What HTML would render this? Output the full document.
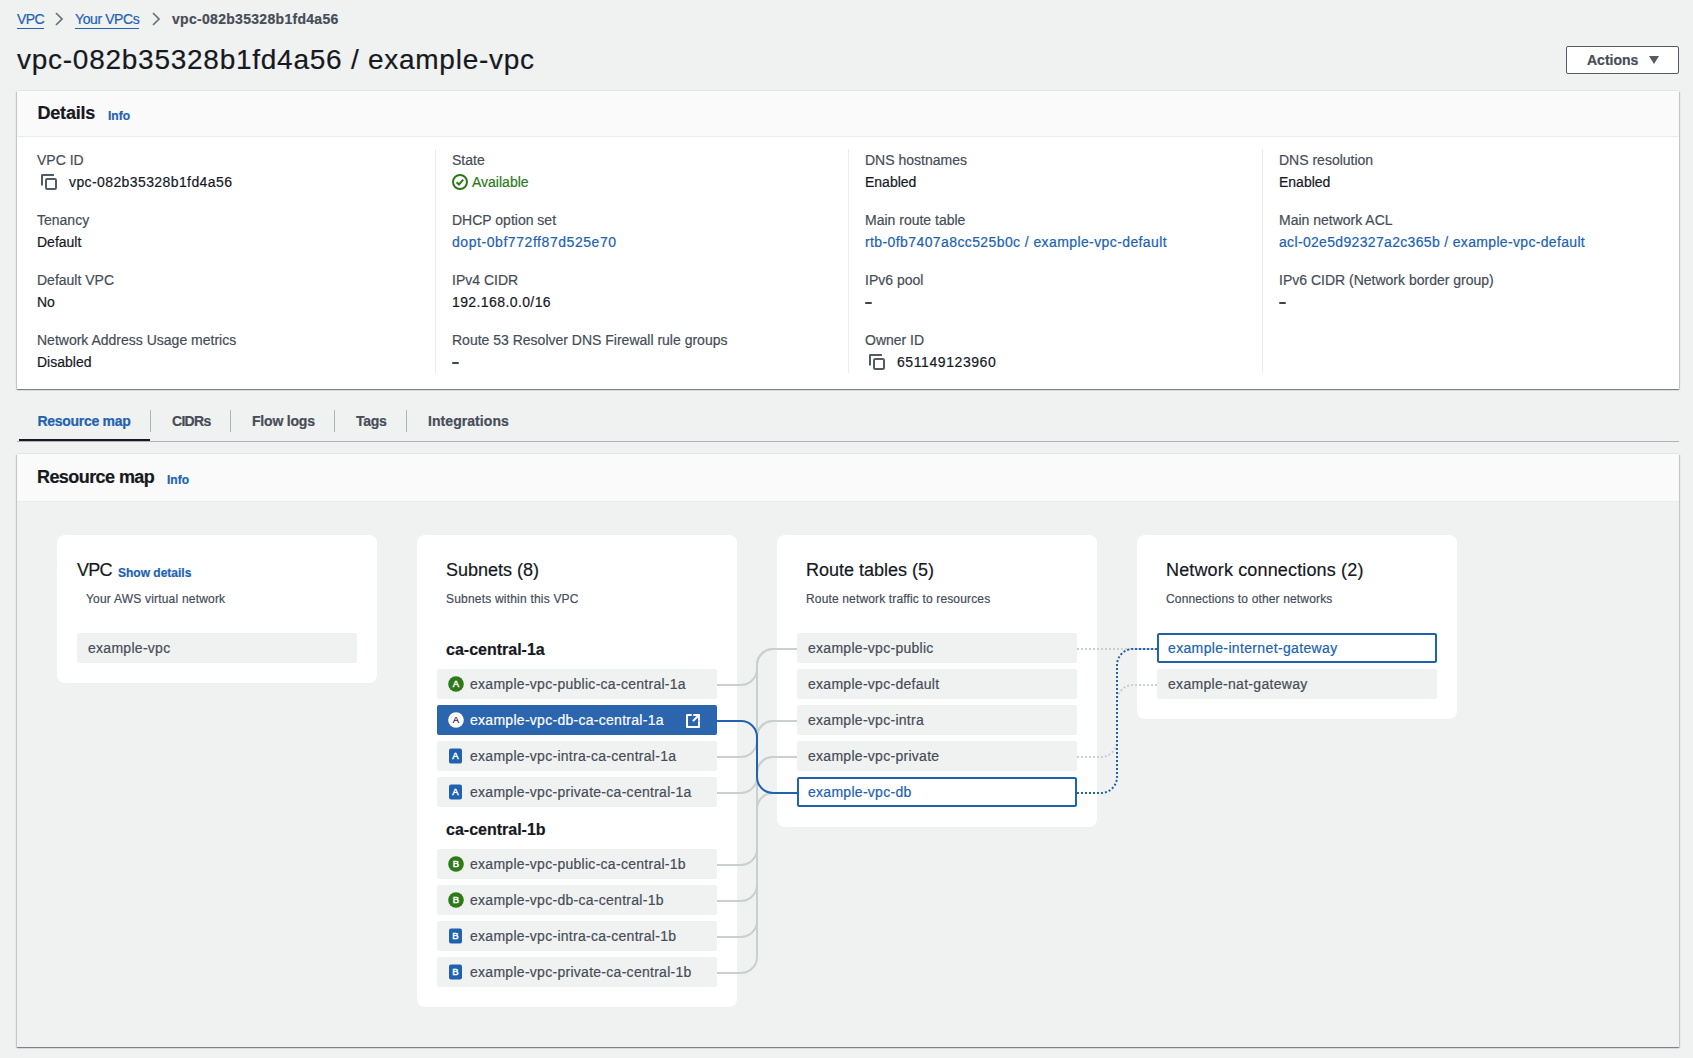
<!DOCTYPE html>
<html><head><meta charset="utf-8">
<style>
*{box-sizing:border-box;margin:0;padding:0}
html,body{width:1693px;height:1058px;overflow:hidden;background:#f0f1f1;font-family:"Liberation Sans",sans-serif;color:#16191f}
.a{position:absolute;white-space:nowrap;-webkit-text-stroke:0.2px currentColor}
.box{position:absolute;box-shadow:0 1px 1px 0 rgba(0,28,36,.3),1px 1px 1px 0 rgba(0,28,36,.15),-1px 1px 1px 0 rgba(0,28,36,.15),0 -1px 0 0 rgba(0,28,36,.05)}
.hdr{position:absolute;left:0;top:0;right:0;background:#fafafa;border-bottom:1px solid #eaeded}
</style></head><body>
<div class="a" style="left:17px;top:10.15px;font-size:14px;line-height:18px;font-weight:normal;color:#2162b0;letter-spacing:-0.6px;"><span style="border-bottom:1px solid #2162b0;padding-bottom:1px">VPC</span></div>
<svg class="a" style="left:54px;top:12px" width="10" height="14" viewBox="0 0 10 14"><path d="M2 1 L8 7 L2 13" fill="none" stroke="#687078" stroke-width="1.7"/></svg>
<div class="a" style="left:75px;top:10.15px;font-size:14px;line-height:18px;font-weight:normal;color:#2162b0;letter-spacing:-0.4px;"><span style="border-bottom:1px solid #2162b0;padding-bottom:1px">Your VPCs</span></div>
<svg class="a" style="left:151px;top:12px" width="10" height="14" viewBox="0 0 10 14"><path d="M2 1 L8 7 L2 13" fill="none" stroke="#687078" stroke-width="1.7"/></svg>
<div class="a" style="left:172px;top:10.15px;font-size:14px;line-height:18px;font-weight:bold;color:#464d57;letter-spacing:0.3px;">vpc-082b35328b1fd4a56</div>
<div class="a" style="left:17px;top:41.90px;font-size:28px;line-height:36px;font-weight:normal;color:#16191f;letter-spacing:0.74px;">vpc-082b35328b1fd4a56 / example-vpc</div>
<div class="a" style="left:1566px;top:46px;width:113px;height:28px;border:1px solid #545b64;border-radius:2px;background:#fff"></div>
<div class="a" style="left:1587px;top:50.95px;font-size:14px;line-height:18px;font-weight:bold;color:#464d57;letter-spacing:0px;">Actions</div>
<svg class="a" style="left:1648px;top:55px" width="12" height="10" viewBox="0 0 12 10"><path d="M1 1 H11 L6 9 Z" fill="#545b64"/></svg>
<div class="box" style="left:17px;top:91px;width:1662px;height:298px;background:#fff"><div class="hdr" style="height:46px"></div></div>
<div class="a" style="left:37.5px;top:102.06px;font-size:18px;line-height:23px;font-weight:bold;color:#16191f;letter-spacing:-0.2px;">Details</div>
<div class="a" style="left:108px;top:107.64px;font-size:12px;line-height:16px;font-weight:bold;color:#2162b0;letter-spacing:0px;">Info</div>
<div class="a" style="left:435px;top:149px;width:1px;height:224px;background:#eaeded"></div>
<div class="a" style="left:848px;top:149px;width:1px;height:224px;background:#eaeded"></div>
<div class="a" style="left:1262px;top:149px;width:1px;height:224px;background:#eaeded"></div>
<div class="a" style="left:37px;top:151.15px;font-size:14px;line-height:18px;font-weight:normal;color:#464d57;letter-spacing:0px;">VPC ID</div>
<svg class="a" style="left:41px;top:174px" width="16" height="16" viewBox="0 0 16 16"><path d="M1 11.5 V1 H13" fill="none" stroke="#545b64" stroke-width="2" stroke-linejoin="round"/><rect x="5" y="5" width="10" height="10" rx="1.2" fill="none" stroke="#545b64" stroke-width="2"/></svg>
<div class="a" style="left:69px;top:173.15px;font-size:14px;line-height:18px;font-weight:normal;color:#16191f;letter-spacing:0.4px;">vpc-082b35328b1fd4a56</div>
<div class="a" style="left:37px;top:211.15px;font-size:14px;line-height:18px;font-weight:normal;color:#464d57;letter-spacing:0px;">Tenancy</div>
<div class="a" style="left:37px;top:233.15px;font-size:14px;line-height:18px;font-weight:normal;color:#16191f;letter-spacing:0px;">Default</div>
<div class="a" style="left:37px;top:271.15px;font-size:14px;line-height:18px;font-weight:normal;color:#464d57;letter-spacing:0px;">Default VPC</div>
<div class="a" style="left:37px;top:293.15px;font-size:14px;line-height:18px;font-weight:normal;color:#16191f;letter-spacing:0px;">No</div>
<div class="a" style="left:37px;top:331.15px;font-size:14px;line-height:18px;font-weight:normal;color:#464d57;letter-spacing:0px;">Network Address Usage metrics</div>
<div class="a" style="left:37px;top:353.15px;font-size:14px;line-height:18px;font-weight:normal;color:#16191f;letter-spacing:0px;">Disabled</div>
<div class="a" style="left:452px;top:151.15px;font-size:14px;line-height:18px;font-weight:normal;color:#464d57;letter-spacing:0px;">State</div>
<svg class="a" style="left:452px;top:174px" width="16" height="16" viewBox="0 0 16 16"><circle cx="8" cy="8" r="7" fill="none" stroke="#2b7a18" stroke-width="2"/><path d="M4.6 8.2 L7 10.5 L11.2 5.6" fill="none" stroke="#2b7a18" stroke-width="2"/></svg>
<div class="a" style="left:472px;top:173.15px;font-size:14px;line-height:18px;font-weight:normal;color:#2b7a18;letter-spacing:0px;">Available</div>
<div class="a" style="left:452px;top:211.15px;font-size:14px;line-height:18px;font-weight:normal;color:#464d57;letter-spacing:0px;">DHCP option set</div>
<div class="a" style="left:452px;top:233.15px;font-size:14px;line-height:18px;font-weight:normal;color:#2162b0;letter-spacing:0.56px;">dopt-0bf772ff87d525e70</div>
<div class="a" style="left:452px;top:271.15px;font-size:14px;line-height:18px;font-weight:normal;color:#464d57;letter-spacing:0px;">IPv4 CIDR</div>
<div class="a" style="left:452px;top:293.15px;font-size:14px;line-height:18px;font-weight:normal;color:#16191f;letter-spacing:0.4px;">192.168.0.0/16</div>
<div class="a" style="left:452px;top:331.15px;font-size:14px;line-height:18px;font-weight:normal;color:#464d57;letter-spacing:0px;">Route 53 Resolver DNS Firewall rule groups</div>
<div class="a" style="left:452px;top:362px;width:7px;height:2px;background:#3f454d;border-radius:1px"></div>
<div class="a" style="left:865px;top:151.15px;font-size:14px;line-height:18px;font-weight:normal;color:#464d57;letter-spacing:0px;">DNS hostnames</div>
<div class="a" style="left:865px;top:173.15px;font-size:14px;line-height:18px;font-weight:normal;color:#16191f;letter-spacing:0px;">Enabled</div>
<div class="a" style="left:865px;top:211.15px;font-size:14px;line-height:18px;font-weight:normal;color:#464d57;letter-spacing:0px;">Main route table</div>
<div class="a" style="left:865px;top:233.15px;font-size:14px;line-height:18px;font-weight:normal;color:#2162b0;letter-spacing:0.4px;">rtb-0fb7407a8cc525b0c / example-vpc-default</div>
<div class="a" style="left:865px;top:271.15px;font-size:14px;line-height:18px;font-weight:normal;color:#464d57;letter-spacing:0px;">IPv6 pool</div>
<div class="a" style="left:865px;top:302px;width:7px;height:2px;background:#3f454d;border-radius:1px"></div>
<div class="a" style="left:865px;top:331.15px;font-size:14px;line-height:18px;font-weight:normal;color:#464d57;letter-spacing:0px;">Owner ID</div>
<svg class="a" style="left:869px;top:354px" width="16" height="16" viewBox="0 0 16 16"><path d="M1 11.5 V1 H13" fill="none" stroke="#545b64" stroke-width="2" stroke-linejoin="round"/><rect x="5" y="5" width="10" height="10" rx="1.2" fill="none" stroke="#545b64" stroke-width="2"/></svg>
<div class="a" style="left:897px;top:353.15px;font-size:14px;line-height:18px;font-weight:normal;color:#16191f;letter-spacing:0.58px;">651149123960</div>
<div class="a" style="left:1279px;top:151.15px;font-size:14px;line-height:18px;font-weight:normal;color:#464d57;letter-spacing:0px;">DNS resolution</div>
<div class="a" style="left:1279px;top:173.15px;font-size:14px;line-height:18px;font-weight:normal;color:#16191f;letter-spacing:0px;">Enabled</div>
<div class="a" style="left:1279px;top:211.15px;font-size:14px;line-height:18px;font-weight:normal;color:#464d57;letter-spacing:0px;">Main network ACL</div>
<div class="a" style="left:1279px;top:233.15px;font-size:14px;line-height:18px;font-weight:normal;color:#2162b0;letter-spacing:0.33px;">acl-02e5d92327a2c365b / example-vpc-default</div>
<div class="a" style="left:1279px;top:271.15px;font-size:14px;line-height:18px;font-weight:normal;color:#464d57;letter-spacing:0px;">IPv6 CIDR (Network border group)</div>
<div class="a" style="left:1279px;top:302px;width:7px;height:2px;background:#3f454d;border-radius:1px"></div>
<div class="a" style="left:37.5px;top:412.15px;font-size:14px;line-height:18px;font-weight:bold;color:#2162b0;letter-spacing:-0.3px;">Resource map</div>
<div class="a" style="left:172px;top:412.15px;font-size:14px;line-height:18px;font-weight:bold;color:#464d57;letter-spacing:-0.7px;">CIDRs</div>
<div class="a" style="left:252px;top:412.15px;font-size:14px;line-height:18px;font-weight:bold;color:#464d57;letter-spacing:-0.2px;">Flow logs</div>
<div class="a" style="left:356px;top:412.15px;font-size:14px;line-height:18px;font-weight:bold;color:#464d57;letter-spacing:-0.3px;">Tags</div>
<div class="a" style="left:428px;top:412.15px;font-size:14px;line-height:18px;font-weight:bold;color:#464d57;letter-spacing:0.06px;">Integrations</div>
<div class="a" style="left:150px;top:410px;width:1px;height:22px;background:#aab7b8"></div>
<div class="a" style="left:230px;top:410px;width:1px;height:22px;background:#aab7b8"></div>
<div class="a" style="left:334px;top:410px;width:1px;height:22px;background:#aab7b8"></div>
<div class="a" style="left:406px;top:410px;width:1px;height:22px;background:#aab7b8"></div>
<div class="a" style="left:17px;top:441px;width:1662px;height:1px;background:#aab7b8"></div>
<div class="a" style="left:19px;top:439px;width:131px;height:2px;background:#16191f"></div>
<div class="box" style="left:17px;top:454px;width:1662px;height:593px;background:#f0f1f1"><div class="hdr" style="height:48px"></div></div>
<div class="a" style="left:37px;top:466.26px;font-size:18px;line-height:23px;font-weight:bold;color:#16191f;letter-spacing:-0.57px;">Resource map</div>
<div class="a" style="left:167px;top:471.84px;font-size:12px;line-height:16px;font-weight:bold;color:#2162b0;letter-spacing:0px;">Info</div>
<div class="a" style="left:57px;top:535px;width:320px;height:148px;background:#fff;border-radius:8px"></div>
<div class="a" style="left:417px;top:535px;width:320px;height:472px;background:#fff;border-radius:8px"></div>
<div class="a" style="left:777px;top:535px;width:320px;height:292px;background:#fff;border-radius:8px"></div>
<div class="a" style="left:1137px;top:535px;width:320px;height:184px;background:#fff;border-radius:8px"></div>
<div class="a" style="left:77px;top:559.26px;font-size:18px;line-height:23px;font-weight:normal;color:#16191f;letter-spacing:-0.8px;">VPC</div>
<div class="a" style="left:118px;top:564.84px;font-size:12px;line-height:16px;font-weight:bold;color:#2162b0;letter-spacing:0px;">Show details</div>
<div class="a" style="left:86px;top:590.84px;font-size:12px;line-height:16px;font-weight:normal;color:#464d57;letter-spacing:0.2px;">Your AWS virtual network</div>
<div class="a" style="left:446px;top:559.26px;font-size:18px;line-height:23px;font-weight:normal;color:#16191f;letter-spacing:0px;">Subnets (8)</div>
<div class="a" style="left:446px;top:590.84px;font-size:12px;line-height:16px;font-weight:normal;color:#464d57;letter-spacing:0.2px;">Subnets within this VPC</div>
<div class="a" style="left:806px;top:559.26px;font-size:18px;line-height:23px;font-weight:normal;color:#16191f;letter-spacing:0px;">Route tables (5)</div>
<div class="a" style="left:806px;top:590.84px;font-size:12px;line-height:16px;font-weight:normal;color:#464d57;letter-spacing:0.15px;">Route network traffic to resources</div>
<div class="a" style="left:1166px;top:559.26px;font-size:18px;line-height:23px;font-weight:normal;color:#16191f;letter-spacing:0.15px;">Network connections (2)</div>
<div class="a" style="left:1166px;top:590.84px;font-size:12px;line-height:16px;font-weight:normal;color:#464d57;letter-spacing:0.15px;">Connections to other networks</div>
<svg class="a" style="left:0;top:0" width="1693" height="1058" viewBox="0 0 1693 1058"><path d="M717 685 H741 A16 16 0 0 0 757 669 V665 A16 16 0 0 1 773 649 H797" fill="none" stroke="#c9d0d0" stroke-width="2"/><path d="M717 757 H741 A16 16 0 0 0 757 741 V737 A16 16 0 0 1 773 721 H797" fill="none" stroke="#c9d0d0" stroke-width="2"/><path d="M717 793 H741 A16 16 0 0 0 757 777 V773 A16 16 0 0 1 773 757 H797" fill="none" stroke="#c9d0d0" stroke-width="2"/><path d="M717 865 H741 A16 16 0 0 0 757 849 V665 A16 16 0 0 1 773 649 H797" fill="none" stroke="#c9d0d0" stroke-width="2"/><path d="M717 901 H741 A16 16 0 0 0 757 885 V809 A16 16 0 0 1 773 793 H797" fill="none" stroke="#c9d0d0" stroke-width="2"/><path d="M717 937 H741 A16 16 0 0 0 757 921 V737 A16 16 0 0 1 773 721 H797" fill="none" stroke="#c9d0d0" stroke-width="2"/><path d="M717 973 H741 A16 16 0 0 0 757 957 V773 A16 16 0 0 1 773 757 H797" fill="none" stroke="#c9d0d0" stroke-width="2"/><path d="M717 721 H741 A16 16 0 0 1 757 737 V777 A16 16 0 0 0 773 793 H797" fill="none" stroke="#2162b0" stroke-width="2"/><path d="M1077 649 H1157" fill="none" stroke="#c9d0d0" stroke-width="2" stroke-dasharray="2 2"/><path d="M1077 757 H1101 A16 16 0 0 0 1117 741 V701 A16 16 0 0 1 1133 685 H1157" fill="none" stroke="#c9d0d0" stroke-width="2" stroke-dasharray="2 2"/><path d="M1077 793 H1101 A16 16 0 0 0 1117 777 V665 A16 16 0 0 1 1133 649 H1157" fill="none" stroke="#2162b0" stroke-width="2" stroke-dasharray="2 2"/></svg>
<div class="a" style="left:77px;top:633px;width:280px;height:30px;background:#f0f1f1;border-radius:2px;"></div>
<div class="a" style="left:88px;top:638.85px;font-size:14px;line-height:18px;font-weight:normal;color:#464d57;letter-spacing:0.28px;">example-vpc</div>
<div class="a" style="left:446px;top:638.96px;font-size:16px;line-height:21px;font-weight:bold;color:#16191f;letter-spacing:0px;">ca-central-1a</div>
<div class="a" style="left:446px;top:818.96px;font-size:16px;line-height:21px;font-weight:bold;color:#16191f;letter-spacing:0px;">ca-central-1b</div>
<div class="a" style="left:437px;top:669px;width:280px;height:30px;background:#f0f1f1;border-radius:2px;"></div>
<div class="a" style="left:470px;top:674.85px;font-size:14px;line-height:18px;font-weight:normal;color:#464d57;letter-spacing:0.28px;">example-vpc-public-ca-central-1a</div>
<svg class="a" style="left:448px;top:676px" width="16" height="16" viewBox="0 0 16 16"><circle cx="8" cy="8" r="7.8" fill="#2f7a18"/><text x="8" y="11.3" text-anchor="middle" font-family="Liberation Sans" font-size="9.5" stroke="#fff" stroke-width="0.45" fill="#fff">A</text></svg>
<div class="a" style="left:437px;top:705px;width:280px;height:30px;background:#2a65ad;border-radius:2px"></div>
<svg class="a" style="left:448px;top:712px" width="16" height="16" viewBox="0 0 16 16"><circle cx="8" cy="8" r="7.8" fill="#fff"/><text x="8" y="11.3" text-anchor="middle" font-family="Liberation Sans" font-size="9.5" stroke="#16191f" stroke-width="0.2" fill="#16191f">A</text></svg>
<div class="a" style="left:470px;top:710.85px;font-size:14px;line-height:18px;font-weight:normal;color:#fff;letter-spacing:0.28px;">example-vpc-db-ca-central-1a</div>
<svg class="a" style="left:685px;top:713px" width="16" height="16" viewBox="0 0 16 16"><path d="M6 2 H2 V14 H14 V9" fill="none" stroke="#fff" stroke-width="2" stroke-linejoin="round" stroke-linecap="round"/><path d="M9 2 H14 V7 M14 2 L8.5 7.5" fill="none" stroke="#fff" stroke-width="2" stroke-linejoin="round" stroke-linecap="round"/></svg>
<div class="a" style="left:437px;top:741px;width:280px;height:30px;background:#f0f1f1;border-radius:2px;"></div>
<div class="a" style="left:470px;top:746.85px;font-size:14px;line-height:18px;font-weight:normal;color:#464d57;letter-spacing:0.28px;">example-vpc-intra-ca-central-1a</div>
<svg class="a" style="left:448px;top:748px" width="16" height="16" viewBox="0 0 16 16"><rect x="1" y="0.5" width="13" height="15" rx="2" fill="#2162b0"/><text x="7.5" y="11.3" text-anchor="middle" font-family="Liberation Sans" font-size="9.5" stroke="#fff" stroke-width="0.45" fill="#fff">A</text></svg>
<div class="a" style="left:437px;top:777px;width:280px;height:30px;background:#f0f1f1;border-radius:2px;"></div>
<div class="a" style="left:470px;top:782.85px;font-size:14px;line-height:18px;font-weight:normal;color:#464d57;letter-spacing:0.28px;">example-vpc-private-ca-central-1a</div>
<svg class="a" style="left:448px;top:784px" width="16" height="16" viewBox="0 0 16 16"><rect x="1" y="0.5" width="13" height="15" rx="2" fill="#2162b0"/><text x="7.5" y="11.3" text-anchor="middle" font-family="Liberation Sans" font-size="9.5" stroke="#fff" stroke-width="0.45" fill="#fff">A</text></svg>
<div class="a" style="left:437px;top:849px;width:280px;height:30px;background:#f0f1f1;border-radius:2px;"></div>
<div class="a" style="left:470px;top:854.85px;font-size:14px;line-height:18px;font-weight:normal;color:#464d57;letter-spacing:0.28px;">example-vpc-public-ca-central-1b</div>
<svg class="a" style="left:448px;top:856px" width="16" height="16" viewBox="0 0 16 16"><circle cx="8" cy="8" r="7.8" fill="#2f7a18"/><text x="8" y="11.3" text-anchor="middle" font-family="Liberation Sans" font-size="9.5" stroke="#fff" stroke-width="0.45" fill="#fff">B</text></svg>
<div class="a" style="left:437px;top:885px;width:280px;height:30px;background:#f0f1f1;border-radius:2px;"></div>
<div class="a" style="left:470px;top:890.85px;font-size:14px;line-height:18px;font-weight:normal;color:#464d57;letter-spacing:0.28px;">example-vpc-db-ca-central-1b</div>
<svg class="a" style="left:448px;top:892px" width="16" height="16" viewBox="0 0 16 16"><circle cx="8" cy="8" r="7.8" fill="#2f7a18"/><text x="8" y="11.3" text-anchor="middle" font-family="Liberation Sans" font-size="9.5" stroke="#fff" stroke-width="0.45" fill="#fff">B</text></svg>
<div class="a" style="left:437px;top:921px;width:280px;height:30px;background:#f0f1f1;border-radius:2px;"></div>
<div class="a" style="left:470px;top:926.85px;font-size:14px;line-height:18px;font-weight:normal;color:#464d57;letter-spacing:0.28px;">example-vpc-intra-ca-central-1b</div>
<svg class="a" style="left:448px;top:928px" width="16" height="16" viewBox="0 0 16 16"><rect x="1" y="0.5" width="13" height="15" rx="2" fill="#2162b0"/><text x="7.5" y="11.3" text-anchor="middle" font-family="Liberation Sans" font-size="9.5" stroke="#fff" stroke-width="0.45" fill="#fff">B</text></svg>
<div class="a" style="left:437px;top:957px;width:280px;height:30px;background:#f0f1f1;border-radius:2px;"></div>
<div class="a" style="left:470px;top:962.85px;font-size:14px;line-height:18px;font-weight:normal;color:#464d57;letter-spacing:0.28px;">example-vpc-private-ca-central-1b</div>
<svg class="a" style="left:448px;top:964px" width="16" height="16" viewBox="0 0 16 16"><rect x="1" y="0.5" width="13" height="15" rx="2" fill="#2162b0"/><text x="7.5" y="11.3" text-anchor="middle" font-family="Liberation Sans" font-size="9.5" stroke="#fff" stroke-width="0.45" fill="#fff">B</text></svg>
<div class="a" style="left:797px;top:633px;width:280px;height:30px;background:#f0f1f1;border-radius:2px;"></div>
<div class="a" style="left:808px;top:638.85px;font-size:14px;line-height:18px;font-weight:normal;color:#464d57;letter-spacing:0.28px;">example-vpc-public</div>
<div class="a" style="left:797px;top:669px;width:280px;height:30px;background:#f0f1f1;border-radius:2px;"></div>
<div class="a" style="left:808px;top:674.85px;font-size:14px;line-height:18px;font-weight:normal;color:#464d57;letter-spacing:0.28px;">example-vpc-default</div>
<div class="a" style="left:797px;top:705px;width:280px;height:30px;background:#f0f1f1;border-radius:2px;"></div>
<div class="a" style="left:808px;top:710.85px;font-size:14px;line-height:18px;font-weight:normal;color:#464d57;letter-spacing:0.28px;">example-vpc-intra</div>
<div class="a" style="left:797px;top:741px;width:280px;height:30px;background:#f0f1f1;border-radius:2px;"></div>
<div class="a" style="left:808px;top:746.85px;font-size:14px;line-height:18px;font-weight:normal;color:#464d57;letter-spacing:0.28px;">example-vpc-private</div>
<div class="a" style="left:797px;top:777px;width:280px;height:30px;background:#fff;border-radius:2px;border:2px solid #2162b0;"></div>
<div class="a" style="left:808px;top:782.85px;font-size:14px;line-height:18px;font-weight:normal;color:#2162b0;letter-spacing:0.28px;">example-vpc-db</div>
<div class="a" style="left:1157px;top:633px;width:280px;height:30px;background:#fff;border-radius:2px;border:2px solid #2162b0;"></div>
<div class="a" style="left:1168px;top:638.85px;font-size:14px;line-height:18px;font-weight:normal;color:#2162b0;letter-spacing:0.35px;">example-internet-gateway</div>
<div class="a" style="left:1157px;top:669px;width:280px;height:30px;background:#f0f1f1;border-radius:2px;"></div>
<div class="a" style="left:1168px;top:674.85px;font-size:14px;line-height:18px;font-weight:normal;color:#464d57;letter-spacing:0.3px;">example-nat-gateway</div>
</body></html>
